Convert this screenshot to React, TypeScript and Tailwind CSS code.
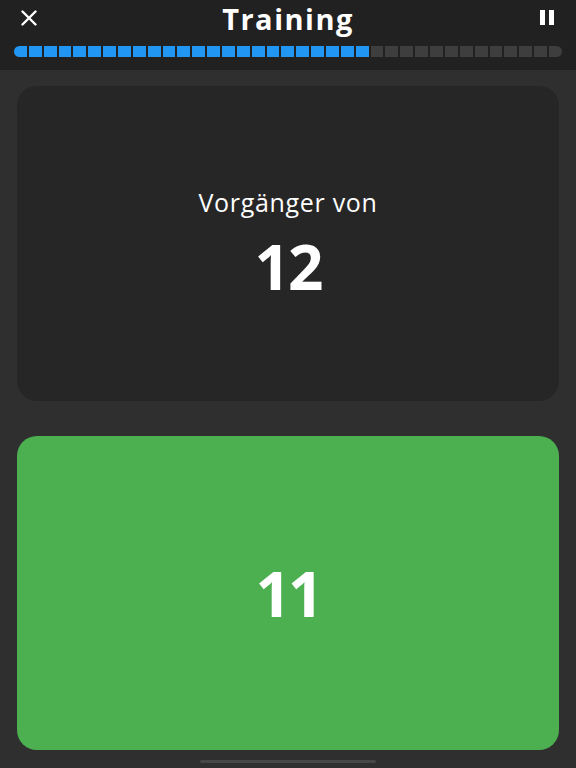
import React from "react";

const TOTAL = 37;
const DONE = 24;

function ProgressBar(props: { done: number; total: number }) {
  const segs = Array.from({ length: props.total }, (_, i) => i);
  return (
    <div className="flex h-[11px] gap-[2px]">
      {segs.map((i) => (
        <div
          key={i}
          className={[
            "flex-1",
            i < props.done ? "bg-[#2196f3]" : "bg-[#3e3e3e]",
            i === 0 ? "rounded-l-full" : "",
            i === props.total - 1 ? "rounded-r-full" : "",
          ].join(" ")}
        />
      ))}
    </div>
  );
}

export default function App() {
  return (
    <div
      className="flex h-[768px] w-full flex-col bg-[#2f2f2f] text-white"
      style={{ fontFamily: '"Open Sans", "Noto Sans", sans-serif' }}
    >
      {/* header */}
      <header className="h-[70px] bg-[#212121] px-[14px]">
        <div className="flex h-[38px] items-start justify-between">
          <button type="button" className="flex h-[35px] w-[30px] items-center justify-center">
            <svg width="16" height="16" viewBox="0 0 16 16">
              <path d="M1.5 1.5 L14.5 14.5 M14.5 1.5 L1.5 14.5" stroke="white" strokeWidth="2.4" strokeLinecap="round" />
            </svg>
          </button>
          <div className="text-[29px] font-bold leading-[38px] tracking-[1.5px]">Training</div>
          <button type="button" className="flex h-[35px] w-[30px] items-center justify-center">
            <div className="flex gap-[4px]">
              <div className="h-[15px] w-[5px] bg-white" />
              <div className="h-[15px] w-[5px] bg-white" />
            </div>
          </button>
        </div>
        <div className="mt-[8px]">
          <ProgressBar done={DONE} total={TOTAL} />
        </div>
      </header>

      {/* content */}
      <main className="flex flex-1 flex-col gap-[35px] px-[17px] pt-4">
        <div className="flex h-[315px] flex-col items-center justify-center rounded-[20px] bg-[#262626]">
          <div className="text-[25px] leading-none tracking-[0.7px]">Vorgänger von</div>
          <div className="mt-[20px] text-[62px] font-bold leading-none tracking-[-2px]">12</div>
        </div>
        <div className="flex h-[314px] items-center justify-center rounded-[20px] bg-[#4caf50]">
          <div className="text-[62px] font-bold leading-none tracking-[-3px]">11</div>
        </div>
      </main>

      <div className="flex h-[18px] justify-center pt-[10px]">
        <div className="h-[3px] w-[176px] rounded-full bg-[#474747]" />
      </div>
    </div>
  );
}
